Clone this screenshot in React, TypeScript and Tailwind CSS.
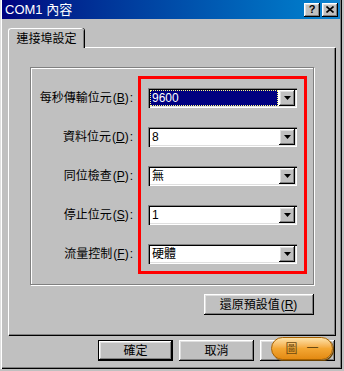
import React from "react";

const FONT = "font-['Liberation_Sans','Noto_Sans_CJK_TC',sans-serif]";
const RAISED =
  "shadow-[inset_-1px_-1px_#000,inset_1px_1px_#fff,inset_-2px_-2px_#808080,inset_2px_2px_#dfdfdf]";
const SUNKEN =
  "shadow-[inset_1px_1px_#808080,inset_2px_2px_#000,inset_-1px_-1px_#fff,inset_-2px_-2px_#dfdfdf]";

const ROWS = [
  { label: "每秒傳輸位元", key: "B", value: "9600", focused: true },
  { label: "資料位元", key: "D", value: "8" },
  { label: "同位檢查", key: "P", value: "無" },
  { label: "停止位元", key: "S", value: "1" },
  { label: "流量控制", key: "F", value: "硬體" },
];

function Hotkey({ k }: { k: string }) {
  return (
    <span className="px-[1px]">
      (<span className="underline underline-offset-1">{k}</span>)
    </span>
  );
}

function Combo({ value, focused }: { value: string; focused?: boolean }) {
  return (
    <div className={`w-[149px] h-[20px] bg-white p-[2px] flex ${SUNKEN}`}>
      <div className="flex-1 flex items-center pr-[1px]">
        {focused ? (
          <div className="w-full h-[16px] bg-[#000080] border border-dotted border-[#ffff80] text-white text-[12px] leading-none flex items-center pl-[1px]">
            {value}
          </div>
        ) : (
          <span className="text-[12px] leading-none pl-[2px] text-black">{value}</span>
        )}
      </div>
      <div className={`w-[16px] h-[16px] bg-[#c0c0c0] flex items-center justify-center ${RAISED}`}>
        <svg width="7" height="4" viewBox="0 0 7 4">
          <path d="M0 0h7L3.5 4z" fill="#000" />
        </svg>
      </div>
    </div>
  );
}

function Button({ children, w, isDefault }: { children?: React.ReactNode; w: string; isDefault?: boolean }) {
  return (
    <div className={`${w} h-[21px] ${isDefault ? "border border-black" : ""}`}>
      <div className={`w-full h-full bg-[#c0c0c0] flex items-center justify-center text-[12px] text-black ${RAISED}`}>
        {children}
      </div>
    </div>
  );
}

export default function App() {
  return (
    <div className={`relative w-[344px] h-[371px] bg-[#c0c0c0] overflow-hidden ${FONT}`}>
      <div className="w-[342px] h-[371px] -mt-[2px] p-[2px] shadow-[inset_1px_1px_#dfdfdf,inset_2px_2px_#fff,inset_-1px_-1px_#000,inset_-2px_-2px_#808080]">
        {/* Title bar */}
        <div className="h-[19px] bg-gradient-to-r from-[#000080] to-[#1084d0] flex items-center pl-[3px] pr-[2px]">
          <span className="text-white text-[13px] flex-1">COM1 內容</span>
          <div className={`w-[16px] h-[14px] bg-[#c0c0c0] flex items-center justify-center text-[11px] font-bold leading-none text-black ${RAISED}`}>
            ?
          </div>
          <div className={`ml-[2px] w-[16px] h-[14px] bg-[#c0c0c0] flex items-center justify-center ${RAISED}`}>
            <svg width="8" height="7" viewBox="0 0 8 7">
              <path d="M0.5 0.5L7.5 6.5M7.5 0.5L0.5 6.5" stroke="#000" strokeWidth="1.6" />
            </svg>
          </div>
        </div>

        {/* Tab strip */}
        <div className="pl-[6px] mt-[9px] flex">
          <div className="relative z-10 w-[76px] h-[20px] -mb-px bg-[#c0c0c0] rounded-t-[3px] border-t border-l border-white shadow-[inset_-1px_0_#808080,1px_0_#000] flex items-center justify-center text-[12px] text-black">
            連接埠設定
          </div>
        </div>

        {/* Tab panel */}
        <div className="ml-[6px] w-[327px] h-[288px] border-t border-l border-white shadow-[inset_-1px_-1px_#808080,1px_1px_#000] pt-[19px] pl-[21px]">
          {/* Group box */}
          <div className="w-[284px] h-[218px] border border-[#808080] shadow-[inset_1px_1px_#fff,1px_1px_#fff] flex">
            <div className="w-[107px] pt-[20px] pr-[5px] flex flex-col gap-[19px]">
              {ROWS.map((r) => (
                <div key={r.key} className="h-[20px] flex items-center justify-end text-[12px] text-black whitespace-nowrap">
                  {r.label}
                  <Hotkey k={r.key} />:
                </div>
              ))}
            </div>
            <div className="mt-[8px] w-[169px] h-[198px] border-[3px] border-[#ff0000] pt-[9px] pl-[7px] flex flex-col gap-[19px]">
              {ROWS.map((r) => (
                <Combo key={r.key} value={r.value} focused={r.focused} />
              ))}
            </div>
          </div>
          <div className="w-[284px] mt-[9px] flex justify-end">
            <Button w="w-[110px]">
              還原預設值<Hotkey k="R" />
            </Button>
          </div>
        </div>

        {/* Dialog buttons */}
        <div className="mt-[5px] pl-[96px] flex gap-[6px]">
          <Button w="w-[75px]" isDefault>
            確定
          </Button>
          <Button w="w-[75px]">取消</Button>
          <Button w="w-[75px]" />
        </div>
      </div>

      {/* Annotation badge */}
      <div className="absolute left-[271px] top-[337px] w-[62px] h-[23px] rounded-full border border-[#a86200] bg-gradient-to-b from-[#fde2a6] via-[#f3a733] to-[#e38a10] shadow-[1px_1px_0_#6a4200] flex items-center justify-center gap-[9px] text-[12px] text-[#6b4a10]">
        <span>圖</span>
        <span>一</span>
      </div>
    </div>
  );
}
